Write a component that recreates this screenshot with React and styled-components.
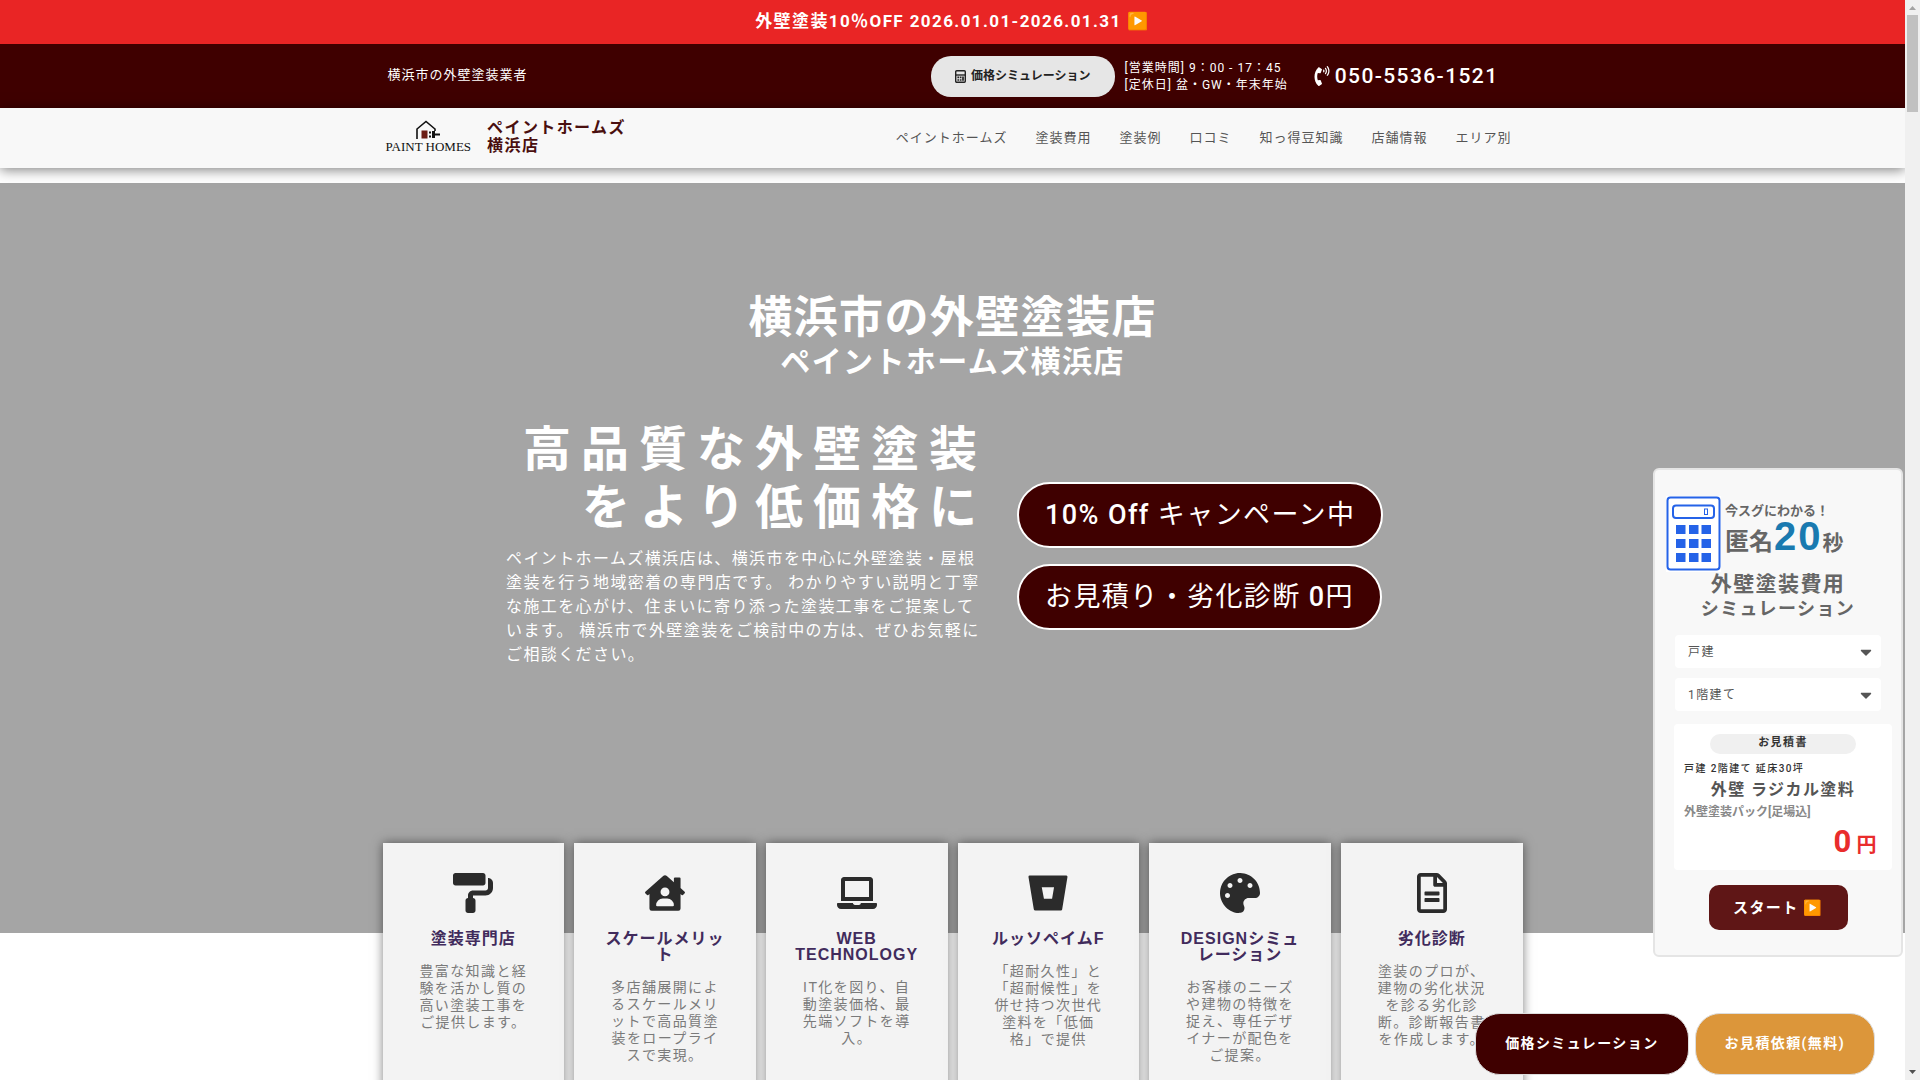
import React, { useState } from 'react';
import {
    FaBitbucket,
    FaCaretDown,
    FaHouseUser,
    FaLaptop,
    FaPaintRoller,
    FaPalette,
    FaPhoneVolume,
    FaRegFileAlt,
} from 'react-icons/fa';
import styled, { createGlobalStyle } from 'styled-components';

const GlobalStyle = createGlobalStyle`
    * {
        box-sizing: border-box;
    }

    body {
        margin: 0;
        font-family: Roboto, 'Noto Sans CJK JP', 'Noto Color Emoji', sans-serif;
        font-size: 14px;
        letter-spacing: 0.1em;
        color: #7a7a7a;
        background: #ffffff;
    }

    h1, h2, h3, p {
        margin: 0;
    }

    a {
        color: inherit;
        text-decoration: none;
    }

    button, select {
        font-family: inherit;
        letter-spacing: inherit;
        cursor: pointer;
    }
`;

const Shell = styled.div`
    display: flex;
    height: 100vh;
    overflow: hidden;
`;

const Viewport = styled.div`
    position: relative;
    flex: 1;
    min-width: 0;
    overflow: hidden;
`;

const Container = styled.div`
    width: 100%;
    max-width: 1140px;
    margin: 0 auto;
    display: flex;
    align-items: center;
    justify-content: space-between;
`;

const Banner = styled.a`
    display: block;
    padding: 9px 0 11px;
    background: #e92525;
    color: #ffffff;
    font-size: 17px;
    font-weight: 700;
    line-height: 24px;
    text-align: center;
`;

const TopBar = styled.div`
    display: flex;
    height: 64px;
    background: #3f0000;
    color: #ffffff;
`;

const Slogan = styled.p`
    padding: 0 0 2px 5px;
    font-size: 13px;
    letter-spacing: 1px;
    line-height: 18px;
`;

const Contact = styled.div`
    display: flex;
    align-items: center;
    gap: 10px;
    padding-right: 24px;
`;

const PricePill = styled.a`
    display: flex;
    align-items: center;
    gap: 5px;
    padding: 12px 24px;
    border-radius: 20px;
    background: #e6e6e6;
    color: #222222;
    font-size: 12px;
    font-weight: 700;
    letter-spacing: 0;
    line-height: 17px;
`;

const Hours = styled.p`
    padding-top: 2px;
    font-size: 12px;
    letter-spacing: 1px;
    line-height: 17px;
`;

const Phone = styled.a`
    display: flex;
    align-items: center;
    gap: 3px;
    margin-left: 14px;
    font-size: 21px;
    font-weight: 500;
`;

const Header = styled.header`
    position: relative;
    display: flex;
    height: 60px;
    background: #f8f8f8;
    box-shadow: 0 2px 12px rgba(0, 0, 0, 0.5);
`;

const Brand = styled.a`
    display: flex;
    align-items: flex-start;
    gap: 16px;
    padding: 0 0 3px 3px;
    color: #4a0f0f;
    font-size: 16px;
    font-weight: 700;
    line-height: 18px;
`;

const Logo = styled.span`
    display: flex;
    flex-direction: column;
    align-items: center;
    padding-top: 1px;
    color: #111111;
    font-family: 'Liberation Serif', serif;
    font-size: 13px;
    font-weight: 400;
    letter-spacing: 0;
    line-height: 14px;
`;

const Nav = styled.nav`
    display: flex;
    gap: 28px;
    padding-right: 11px;
    color: #555555;
    font-size: 13px;
    letter-spacing: 1px;
    line-height: 18px;
`;

const Hero = styled.section`
    min-height: 750px;
    margin-top: 15px;
    padding-top: 112px;
    background: #a5a5a5;
    color: #ffffff;
`;

const HeroTitle = styled.h1`
    font-size: 44px;
    line-height: 47px;
    text-align: center;
`;

const HeroSubtitle = styled.h2`
    font-size: 30px;
    line-height: 40px;
    text-align: center;
`;

const HeroColumns = styled.div`
    display: grid;
    grid-template-columns: 481px 1fr;
    gap: 30px;
    width: 893px;
    max-width: 100%;
    margin: 39px auto 0;
`;

const Catch = styled.h2`
    font-size: 48px;
    letter-spacing: 10px;
    line-height: 58px;
    text-align: right;
`;

const Lead = styled.p`
    margin-top: 10px;
    font-size: 16px;
    line-height: 24px;
`;

const HeroActions = styled.div`
    display: flex;
    flex-direction: column;
    align-items: flex-start;
    gap: 16px;
    padding-top: 61px;
`;

const HeroButton = styled.a`
    padding: 14px 26px;
    border: 2px solid #ffffff;
    border-radius: 33px;
    background: #3f0000;
    font-size: 27px;
    line-height: 34px;
    white-space: nowrap;

    b {
        font-weight: 500;
    }
`;

const Features = styled.section`
    position: relative;
    display: grid;
    grid-template-columns: repeat(6, 1fr);
    gap: 10px;
    max-width: 1140px;
    margin: -90px auto 0;
`;

const FeatureCard = styled.article`
    display: flex;
    flex-direction: column;
    align-items: center;
    min-height: 300px;
    padding: 30px 26px;
    background: #f3f3f3;
    box-shadow: 0 0 10px rgba(0, 0, 0, 0.5);
    text-align: center;

    svg {
        flex: none;
        color: #2b2b2b;
        font-size: 40px;
    }

    h3 {
        margin: 18px 0 16px;
        color: #412b5c;
        font-family: 'Liberation Sans', 'Noto Sans CJK JP', sans-serif;
        font-size: 16px;
        letter-spacing: 1px;
        line-height: 16px;
    }

    p {
        padding: 0 4px;
        font-family: 'Liberation Sans', 'Noto Sans CJK JP', sans-serif;
        line-height: 17px;
        text-spacing-trim: space-all;
    }
`;

const Simulator = styled.form`
    position: absolute;
    top: 468px;
    right: 2px;
    width: 250px;
    padding: 26px 9px 25px;
    border: 2px solid #e5e5e5;
    border-radius: 6px;
    background: #f8f8f8;
    color: #666666;
    font-weight: 700;
`;

const SimulatorHead = styled.div`
    display: flex;
    gap: 4px;
    padding-left: 2px;
`;

const Pitch = styled.div`
    padding-top: 7px;
    font-size: 13px;
    letter-spacing: 0;
    line-height: 16px;
    white-space: nowrap;
`;

const Seconds = styled.div`
    display: flex;
    align-items: baseline;
    font-size: 24px;
    line-height: 34px;

    strong {
        margin-left: 1px;
        color: #1a7ab0;
        font-family: 'Liberation Sans', sans-serif;
        font-size: 40px;
        letter-spacing: 2px;
    }

    small {
        font-size: 21px;
    }
`;

const SimulatorTitle = styled.h2`
    font-size: 21px;
    line-height: 25px;
    text-align: center;

    small {
        display: block;
        font-size: 18px;
        line-height: 24px;
    }
`;

const Fields = styled.div`
    display: flex;
    flex-direction: column;
    gap: 10px;
    padding: 14px 11px 13px;
`;

const SelectBox = styled.label`
    display: grid;
    align-items: center;

    select,
    svg {
        grid-area: 1 / 1;
    }

    select {
        width: 100%;
        height: 33px;
        padding: 0 13px;
        appearance: none;
        border: 0;
        border-radius: 4px;
        background: #ffffff;
        color: #555555;
        font-size: 12px;
    }

    svg {
        justify-self: end;
        margin-right: 6px;
        color: #555555;
        font-size: 18px;
        pointer-events: none;
    }
`;

const Quote = styled.div`
    display: flex;
    flex-direction: column;
    margin: 0 0 15px 10px;
    padding: 10px;
    border-radius: 4px;
    background: #ffffff;
`;

const QuoteTag = styled.span`
    align-self: center;
    width: 146px;
    height: 20px;
    border-radius: 10px;
    background: #f0f0f0;
    color: #333333;
    font-size: 11px;
    line-height: 17px;
    text-align: center;
`;

const QuoteSpec = styled.span`
    margin-top: 7px;
    color: #333333;
    font-size: 10px;
    font-weight: 500;
    line-height: 16px;
`;

const QuoteName = styled.span`
    color: #555555;
    font-size: 16px;
    line-height: 26px;
    text-align: center;
`;

const QuotePack = styled.span`
    color: #888888;
    font-size: 12px;
    letter-spacing: 0;
    line-height: 18px;
`;

const QuotePrice = styled.span`
    padding: 3px 4px 0;
    color: #e92c2c;
    font-size: 31px;
    line-height: 36px;
    text-align: right;

    small {
        margin-left: 4px;
        font-size: 20px;
        line-height: 1;
    }
`;

const StartButton = styled.button`
    display: block;
    height: 45px;
    margin-left: 45px;
    padding: 0 24px 3px;
    border: 0;
    border-radius: 10px;
    background: #5f1616;
    color: #ffffff;
    font-size: 15px;
    font-weight: 700;
    white-space: nowrap;
`;

const FloatingActions = styled.div`
    position: absolute;
    right: 30px;
    bottom: 5px;
    display: flex;
    gap: 6px;
`;

const FloatingButton = styled.a`
    padding: 19px 29px 21px;
    border: 1px solid #dddddd;
    border-radius: 25px;
    background: ${(props) => (props.$accent ? '#dc963a' : '#3f0000')};
    color: #ffffff;
    font-weight: 700;
    line-height: 20px;
`;

const ScrollTrack = styled.div`
    display: flex;
    flex-direction: column;
    align-items: center;
    width: 15px;
    padding: 6px 0;
    background: #f0f0f0;
`;

const ScrollThumb = styled.div`
    width: 11px;
    height: 97px;
    margin: 5px 0 auto;
    background: #c1c1c1;
`;

const navItems = ['ペイントホームズ', '塗装費用', '塗装例', '口コミ', '知っ得豆知識', '店舗情報', 'エリア別'];

const features = [
    { icon: FaPaintRoller, title: '塗装専門店', text: '豊富な知識と経験を活かし質の高い塗装工事をご提供します。' },
    { icon: FaHouseUser, title: 'スケールメリット', text: '多店舗展開によるスケールメリットで高品質塗装をロープライスで実現。' },
    { icon: FaLaptop, title: 'WEB TECHNOLOGY', text: 'IT化を図り、自動塗装価格、最先端ソフトを導入。' },
    { icon: FaBitbucket, title: 'ルッソペイムF', text: '「超耐久性」と「超耐候性」を併せ持つ次世代塗料を「低価格」で提供' },
    { icon: FaPalette, title: 'DESIGNシミュレーション', text: 'お客様のニーズや建物の特徴を捉え、専任デザイナーが配色をご提案。' },
    { icon: FaRegFileAlt, title: '劣化診断', text: '塗装のプロが、建物の劣化状況を診る劣化診断。診断報告書を作成します。' },
];

const HouseMark = () => (
    <svg width='28' height='20' viewBox='0 0 28 20' aria-hidden='true'>
        <path d='M3 19V9L12 1.5L21 9V11' fill='none' stroke='#111' strokeWidth='1.6' />
        <rect x='7.5' y='10.5' width='6' height='8' fill='#6b1c14' />
        <path d='M15 11.5h2v2h-2zM15 15.5h2v2h-2zM18 11h3v2.5h5v2h-5V18h-3z' fill='#111' />
    </svg>
);

const SmallCalculator = () => (
    <svg width='11' height='13' viewBox='0 0 11 13' fill='none' stroke='#222' strokeWidth='1.4' aria-hidden='true'>
        <rect x='0.7' y='0.7' width='9.6' height='11.6' rx='1' />
        <path d='M1 5h9' />
        <path d='M2.4 7.4h1.7M4.8 7.4h1.7M2.4 10h1.7M4.8 10h1.7M8 6.6v4.2' strokeWidth='1.7' />
    </svg>
);

const BigCalculator = () => (
    <svg width='55' height='76' viewBox='0 0 55 76' aria-hidden='true'>
        <rect width='55' height='76' fill='#fff' />
        <rect x='1.5' y='1.5' width='52' height='72' rx='3' fill='#fff' stroke='#2563e8' strokeWidth='2' />
        <rect x='7' y='9.5' width='41' height='12.5' rx='3' fill='#fff' stroke='#2563e8' strokeWidth='2' />
        <rect x='38.5' y='13' width='3' height='5.5' fill='none' stroke='#2563e8' strokeWidth='1' />
        {[29, 43, 57].map((y) =>
            [10, 23, 35.5].map((x) => (
                <rect key={`${x}-${y}`} x={x} y={y} width='9.5' height='9' fill='#2563e8' />
            ))
        )}
    </svg>
);

const App = () => {
    const [building, setBuilding] = useState('戸建');
    const [floors, setFloors] = useState('1階建て');

    return (
        <>
            <GlobalStyle />
            <Shell lang='ja'>
                <Viewport>
                    <Banner href='#campaign'>外壁塗装10％OFF 2026.01.01-2026.01.31 ▶️</Banner>
                    <TopBar>
                        <Container>
                            <Slogan>横浜市の外壁塗装業者</Slogan>
                            <Contact>
                                <PricePill href='#simulation'>
                                    <SmallCalculator />
                                    価格シミュレーション
                                </PricePill>
                                <Hours>
                                    [営業時間] 9：00 - 17：45
                                    <br />
                                    [定休日] 盆・GW・年末年始
                                </Hours>
                                <Phone href='tel:050-5536-1521'>
                                    <FaPhoneVolume size={20} width={15} />
                                    050-5536-1521
                                </Phone>
                            </Contact>
                        </Container>
                    </TopBar>
                    <Header>
                        <Container>
                            <Brand href='#top'>
                                <Logo>
                                    <HouseMark />
                                    PAINT HOMES
                                </Logo>
                                <span>
                                    ペイントホームズ
                                    <br />
                                    横浜店
                                </span>
                            </Brand>
                            <Nav>
                                {navItems.map((item) => (
                                    <a href='#menu' key={item}>{item}</a>
                                ))}
                            </Nav>
                        </Container>
                    </Header>

                    <Hero>
                        <HeroTitle>横浜市の外壁塗装店</HeroTitle>
                        <HeroSubtitle>ペイントホームズ横浜店</HeroSubtitle>
                        <HeroColumns>
                            <div>
                                <Catch>高品質な外壁塗装をより低価格に</Catch>
                                <Lead>
                                    ペイントホームズ横浜店は、横浜市を中心に外壁塗装・屋根塗装を行う地域密着の専門店です。 わかりやすい説明と丁寧な施工を心がけ、住まいに寄り添った塗装工事をご提案しています。 横浜市で外壁塗装をご検討中の方は、ぜひお気軽にご相談ください。
                                </Lead>
                            </div>
                            <HeroActions>
                                <HeroButton href='#campaign'><b>10% Off</b> キャンペーン中</HeroButton>
                                <HeroButton href='#estimate'>お見積り・劣化診断 <b>0</b>円</HeroButton>
                            </HeroActions>
                        </HeroColumns>
                    </Hero>

                    <Features>
                        {features.map(({ icon: Icon, title, text }) => (
                            <FeatureCard key={title}>
                                <Icon />
                                <h3>{title}</h3>
                                <p>{text}</p>
                            </FeatureCard>
                        ))}
                    </Features>

                    <Simulator onSubmit={(e) => e.preventDefault()}>
                        <SimulatorHead>
                            <BigCalculator />
                            <Pitch>
                                今スグにわかる！
                                <Seconds>
                                    匿名<strong>20</strong><small>秒</small>
                                </Seconds>
                            </Pitch>
                        </SimulatorHead>
                        <SimulatorTitle>
                            外壁塗装費用
                            <small>シミュレーション</small>
                        </SimulatorTitle>
                        <Fields>
                            <SelectBox>
                                <select aria-label='建物の種類' value={building} onChange={(e) => setBuilding(e.target.value)}>
                                    <option>戸建</option>
                                    <option>アパート</option>
                                </select>
                                <FaCaretDown />
                            </SelectBox>
                            <SelectBox>
                                <select aria-label='階数' value={floors} onChange={(e) => setFloors(e.target.value)}>
                                    <option>1階建て</option>
                                    <option>2階建て</option>
                                    <option>3階建て</option>
                                </select>
                                <FaCaretDown />
                            </SelectBox>
                        </Fields>
                        <Quote>
                            <QuoteTag>お見積書</QuoteTag>
                            <QuoteSpec>戸建 2階建て 延床30坪</QuoteSpec>
                            <QuoteName>外壁 ラジカル塗料</QuoteName>
                            <QuotePack>外壁塗装パック[足場込]</QuotePack>
                            <QuotePrice>
                                0<small>円</small>
                            </QuotePrice>
                        </Quote>
                        <StartButton type='submit'>スタート ▶️</StartButton>
                    </Simulator>

                    <FloatingActions>
                        <FloatingButton href='#simulation'>価格シミュレーション</FloatingButton>
                        <FloatingButton href='#estimate' $accent>お見積依頼(無料)</FloatingButton>
                    </FloatingActions>
                </Viewport>
                <ScrollTrack aria-hidden='true'>
                    <svg width='7' height='4' viewBox='0 0 7 4'>
                        <path d='M0 4L3.5 0L7 4z' fill='#a3a3a3' />
                    </svg>
                    <ScrollThumb />
                    <svg width='7' height='4' viewBox='0 0 7 4'>
                        <path d='M0 0L3.5 4L7 0z' fill='#505050' />
                    </svg>
                </ScrollTrack>
            </Shell>
        </>
    );
};

export default App;
